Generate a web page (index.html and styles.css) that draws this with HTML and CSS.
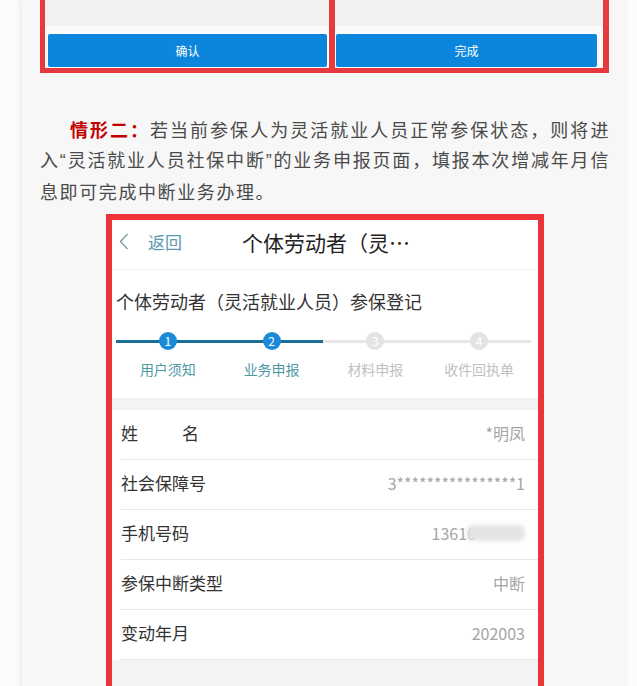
FILE: index.html
```html
<!DOCTYPE html>
<html lang="zh-CN">
<head>
    <meta charset="UTF-8">
    <meta name="viewport" content="width=device-width, initial-scale=1.0">
    <title>灵活就业人员社保中断</title>
    <link rel="stylesheet" href="styles.css">
</head>
<body>

<div class="page">

    <div class="shot-top">
        <div class="shot-half left">
            <div class="shot-gray"></div>
            <div class="shot-foot"><div class="shot-btn">确认</div></div>
        </div>
        <div class="shot-half right">
            <div class="shot-gray"></div>
            <div class="shot-foot"><div class="shot-btn">完成</div></div>
        </div>
    </div>

    <p class="text"><span class="hl">情形二：</span>若当前参保人为灵活就业人员正常参保状态，则将进入<span class="q">“</span>灵活就业人员社保中断<span class="q">”</span>的业务申报页面，填报本次增减年月信息即可完成中断业务办理。</p>

    <div class="phone">
        <div class="bar">
            <svg class="back-icon" width="10" height="17" viewBox="0 0 10 17">
                <path d="M8.5 1 L1.5 8.5 L8.5 16" fill="none" stroke="#7c9aa6" stroke-width="1.4"/>
            </svg>
            <span class="back-text">返回</span>
            <span class="bar-title">个体劳动者（灵…</span>
        </div>

        <div class="intro">
            <h2 class="form-title">个体劳动者（灵活就业人员）参保登记</h2>
            <div class="steps">
                <div class="step done"><span class="dot">1</span><span class="label">用户须知</span></div>
                <div class="step done"><span class="dot">2</span><span class="label">业务申报</span></div>
                <div class="step"><span class="dot">3</span><span class="label">材料申报</span></div>
                <div class="step"><span class="dot">4</span><span class="label">收件回执单</span></div>
            </div>
        </div>

        <div class="rows">
            <div class="row"><span class="key key-name">姓名</span><span class="val">*明凤</span></div>
            <div class="row"><span class="key">社会保障号</span><span class="val">3****************1</span></div>
            <div class="row"><span class="key">手机号码</span><span class="val">13616<span class="blur"></span></span></div>
            <div class="row"><span class="key">参保中断类型</span><span class="val">中断</span></div>
            <div class="row"><span class="key">变动年月</span><span class="val">202003</span></div>
        </div>
    </div>

</div>

</body>
</html>
```

FILE: styles.css
```css
body {
    margin: 0;
    background-color: #fcfcfc;
    font-family: "Noto Sans CJK SC", "Noto Sans", sans-serif;
    overflow: hidden;
}
.page {
    margin-left: 22px;
    width: 606px;
    min-height: 100vh;
    background-color: #f7f7f7;
    box-shadow: -3px 0 4px rgba(0, 0, 0, 0.06);
    padding: 0 18px;
    box-sizing: border-box;
}

/* capture du haut, coupée */
.shot-top {
    display: flex;
    gap: 6px;
    width: 569px;
    border: 5px solid #e63a3e;
    border-top: 0;
    background-color: #e63a3e;
    box-sizing: border-box;
}
.shot-half {
    background-color: #fbfbfb;
}
.shot-half.left {
    width: 284px;
}
.shot-half.right {
    width: 268px;
}
.shot-gray {
    height: 26px;
    background-color: #f2f2f2;
}
.shot-foot {
    padding: 8px 2px 1px 3px;
}
.shot-half.right .shot-foot {
    padding: 8px 6px 1px 1px;
}
.shot-btn {
    height: 33px;
    line-height: 33px;
    background-color: #0b86dc;
    border-radius: 2px;
    color: #ffffff;
    font-size: 12px;
    text-align: center;
}

.text {
    margin: 41px 0 0;
    font-size: 18px;
    line-height: 30px;
    letter-spacing: 1.6px;
    color: #4a4a4a;
    text-indent: 30px;
    text-align: justify;
}
.hl {
    color: #c40000;
    font-weight: bold;
}
/* guillemets étroits comme sur la capture */
.q {
    font-family: "Liberation Sans", sans-serif;
}

/* capture du téléphone */
.phone {
    width: 438px;
    margin: 8px auto 0;
    border: 6px solid #ee3438;
    border-bottom: 0;
    box-sizing: border-box;
    background-color: #f3f3f5;
    min-height: 480px;
}
.bar {
    display: flex;
    align-items: center;
    height: 43px;
    padding: 0 0 6px 7px;
    background-color: #fff;
    border-bottom: 1px solid #f0f0f0;
}
.back-icon {
    margin-right: 19px;
}
.back-text {
    font-size: 17px;
    color: #5c98b0;
}
.bar-title {
    margin-left: 60px;
    font-size: 21px;
    color: #222;
}
.intro {
    background-color: #fff;
    padding: 19px 7px 19px 4px;
}
.form-title {
    margin: 0;
    font-size: 18px;
    font-weight: normal;
    line-height: 24px;
    color: #333;
}
.steps {
    display: grid;
    grid-template-columns: repeat(4, 1fr);
    margin-top: 19px;
    background-image: linear-gradient(to right, #1b6e98 50%, #e6e6e8 50%);
    background-size: 100% 3px;
    background-position: 0 8px;
    background-repeat: no-repeat;
}
.step {
    display: flex;
    flex-direction: column;
    align-items: center;
}
.dot {
    width: 18px;
    height: 18px;
    line-height: 18px;
    border-radius: 50%;
    background-color: #e3e3e5;
    color: #fff;
    font-size: 12px;
    text-align: center;
}
.label {
    margin-top: 9px;
    font-size: 14px;
    line-height: 20px;
    color: #c0c0c0;
}
.step.done .dot {
    background-color: #1a8ad8;
}
.step.done .label {
    color: #4f98a6;
}
.rows {
    margin-top: 12px;
    background-color: #fff;
    padding-left: 9px;
}
.row {
    display: flex;
    justify-content: space-between;
    align-items: center;
    height: 45px;
    padding: 0 13px 4px 0;
    border-bottom: 1px solid #e8e8e8;
}
.key {
    font-size: 17px;
    color: #333;
}
.key-name {
    width: 78px;
    text-align: justify;
    text-align-last: justify;
}
.val {
    font-size: 16px;
    color: #a5a5a5;
    display: flex;
    align-items: center;
}
.blur {
    width: 58px;
    height: 16px;
    margin-left: -9px;
    background-color: #e4e4e4;
    border-radius: 6px;
    filter: blur(2px);
}
```
